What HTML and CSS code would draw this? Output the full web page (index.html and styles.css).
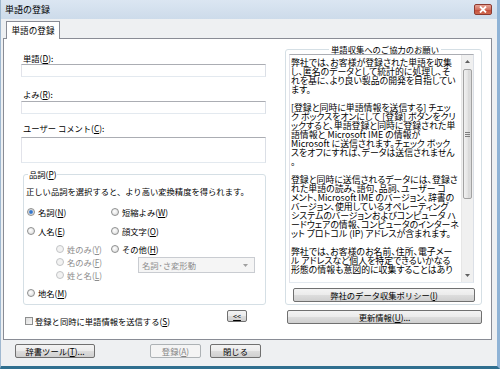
FILE: index.html
```html
<html>
    <head>
        <link rel="stylesheet" href="styles.css">
    </head>
    <body>
        <div class="window">
            <div class="titlebar">
                <span class="title">単語の登録</span>
                <span class="close-btn">
                    <svg width="10" height="7" viewBox="0 0 10 7"><path d="M2 0.5 L8 6.5 M8 0.5 L2 6.5" stroke="#fff" stroke-width="1.8"/></svg>
                </span>
            </div>
            <div class="client">
                <div class="tabs"><div class="tab">単語の登録</div></div>
                <div class="panel">
                    <div class="left-col">
                        <div class="lbl lbl-word">単語(<u>D</u>):</div>
                        <div class="textbox tb-word"></div>
                        <div class="lbl lbl-yomi">よみ(<u>R</u>):</div>
                        <div class="textbox tb-yomi"></div>
                        <div class="lbl lbl-comment">ユーザー コメント(<u>C</u>):</div>
                        <div class="textbox tb-comment"></div>

                        <fieldset class="group hinshi">
                            <legend>品詞(<u>P</u>)</legend>
                            <div class="hint">正しい品詞を選択すると、より高い変換精度を得られます。</div>
                            <div class="radio-cols">
                                <div class="radio-col">
                                    <div class="opt r1"><span class="radio checked"></span>名詞(<u>N</u>)</div>
                                    <div class="opt r2"><span class="radio"></span>人名(<u>E</u>)</div>
                                    <div class="opt sub r3 off"><span class="radio"></span>姓のみ(<u>Y</u>)</div>
                                    <div class="opt sub r4 off"><span class="radio"></span>名のみ(<u>F</u>)</div>
                                    <div class="opt sub r4 off"><span class="radio"></span>姓と名(<u>L</u>)</div>
                                    <div class="opt r6"><span class="radio"></span>地名(<u>M</u>)</div>
                                </div>
                                <div class="radio-col col-b">
                                    <div class="opt r1"><span class="radio"></span>短縮よみ(<u>W</u>)</div>
                                    <div class="opt r2"><span class="radio"></span>顔文字(<u>O</u>)</div>
                                    <div class="opt r3"><span class="radio"></span>その他(<u>H</u>)</div>
                                    <div class="combo">
                                        <span>名詞･さ変形動</span>
                                        <svg width="5" height="3" viewBox="0 0 5 3"><path d="M0 0 H5 L2.5 3 Z" fill="#a0a0a0"/></svg>
                                    </div>
                                </div>
                            </div>
                        </fieldset>

                        <div class="send-row">
                            <div class="send"><span class="check"></span>登録と同時に単語情報を送信する(<u>S</u>)</div>
                            <div class="btn btn-collapse"><u>&lt;&lt;</u></div>
                        </div>
                    </div>

                    <div class="right-col">
                        <fieldset class="group request">
                            <legend>単語収集へのご協力のお願い</legend>
                            <div class="memo">
                                <div class="memo-text">
                                    弊社では、お客様が登録された単語を収集<br>
                                    し、匿名のデータとして統計的に処理し、そ<br>
                                    れを基に、より良い製品の開発を目指してい<br>
                                    ます。<br>
                                    <br>
                                    [登録と同時に単語情報を送信する] チェッ<br>
                                    ク ボックスをオンにして [登録] ボタンをクリ<br>
                                    ックすると、単語登録と同時に登録された単<br>
                                    語情報と Microsoft IME の情報が<br>
                                    Microsoft に送信されます。チェック ボック<br>
                                    スをオフにすれば、データは送信されません<br>
                                    。<br>
                                    <br>
                                    登録と同時に送信されるデータには、登録さ<br>
                                    れた単語の読み、語句、品詞、ユーザー コ<br>
                                    メント、Microsoft IME のバージョン、辞書の<br>
                                    バージョン、使用しているオペレーティング<br>
                                    システムのバージョンおよびコンピュータ ハ<br>
                                    ードウェアの情報、コンピュータのインターネ<br>
                                    ット プロトコル (IP) アドレスが含まれます。<br>
                                    <br>
                                    弊社では、お客様のお名前、住所、電子メー<br>
                                    ル アドレスなど個人を特定できるいかなる<br>
                                    形態の情報も意図的に収集することはあり
                                </div>
                                <div class="scrollbar">
                                    <div class="sb-arrow"><svg width="5" height="3" viewBox="0 0 5 3"><path d="M0 3 H5 L2.5 0 Z" fill="#606060"/></svg></div>
                                    <div class="sb-track">
                                        <div class="sb-thumb"><span class="grip"></span></div>
                                    </div>
                                    <div class="sb-arrow"><svg width="5" height="3" viewBox="0 0 5 3"><path d="M0 0 H5 L2.5 3 Z" fill="#606060"/></svg></div>
                                </div>
                            </div>
                            <div class="btn btn-policy">弊社のデータ収集ポリシー(<u>I</u>)</div>
                        </fieldset>
                        <div class="btn btn-update">更新情報(<u>U</u>)...</div>
                    </div>
                </div>

                <div class="footer">
                    <div class="btn btn-tools">辞書ツール(<u>T</u>)...</div>
                    <div class="btn btn-register disabled">登録(<u>A</u>)</div>
                    <div class="btn btn-close">閉じる</div>
                </div>
            </div>
        </div>
    </body>
</html>
```

FILE: styles.css
```css
body {
    margin: 0;
    font-family: "Noto Sans CJK JP", "Noto Sans", sans-serif;
    font-size: 8.3px;
    color: #000;
}

u {
    text-decoration: underline;
    text-underline-offset: 1px;
}

.window {
    width: 500px;
    height: 369px;
    box-sizing: border-box;
    display: flex;
    flex-direction: column;
    background: #eef0f2;
    border-left: 1px solid #9fb8d0;
    border-right: 3px solid #8fb3d6;
    border-bottom: 3px solid #2f6f8f;
}

/* title bar */
.titlebar {
    height: 19px;
    display: flex;
    align-items: flex-start;
    background: linear-gradient(#dbe6f2, #cddbea);
}
.title {
    font-size: 9px;
    line-height: 19px;
    padding-left: 4px;
}
.close-btn {
    margin: 4px 5px 0 auto;
    width: 18px;
    height: 11px;
    box-sizing: border-box;
    border: 1px solid #8d3a30;
    border-radius: 2px;
    background: linear-gradient(#e7a496, #d2705f 50%, #c24a38 51%, #d06a50);
    display: flex;
    align-items: center;
    justify-content: center;
}

.client {
    flex: 1;
    display: flex;
    flex-direction: column;
    padding: 2px 5px 0 2px;
}

/* tab */
.tabs {
    display: flex;
    height: 17px;
}
.tab {
    margin-left: 3px;
    width: 54px;
    height: 18px;
    box-sizing: border-box;
    border: 1px solid #898c95;
    border-bottom: none;
    background: #fff;
    text-align: center;
    line-height: 17px;
    font-size: 8.6px;
    position: relative;
    z-index: 1;
}

.panel {
    width: 489px;
    height: 302px;
    box-sizing: border-box;
    border: 1px solid #898c95;
    background: #fff;
    display: flex;
}

/* left column */
.left-col {
    width: 245px;
    margin-left: 17px;
    display: flex;
    flex-direction: column;
}
.lbl {
    line-height: 10px;
    padding-left: 2px;
}
.lbl-word { margin-top: 14px; }
.lbl-yomi { margin-top: 12px; }
.lbl-comment { margin-top: 9px; }

.textbox {
    box-sizing: border-box;
    border: 1px solid;
    border-color: #abadb3 #dbdfe6 #e3e9ef #e2e3ea;
    background: #fff;
}
.tb-word { margin-top: 1px; height: 13px; }
.tb-yomi { margin-top: 2px; height: 13px; }
.tb-comment { margin-top: 4px; height: 26px; }

.group {
    margin: 0;
    padding: 0;
    border: 1px solid #d5dfe5;
    border-radius: 3px;
    min-width: 0;
}
.group legend {
    line-height: 10px;
    padding: 0 1px;
}

.hinshi {
    margin: 6px 0 0 2px;
    padding: 0 0 5px 2px;
}
.hinshi legend {
    margin-left: 2px;
}
.hint {
    margin-top: 7px;
    line-height: 10px;
}

.radio-cols {
    display: flex;
    margin-top: 10px;
}
.radio-col {
    width: 84px;
    display: flex;
    flex-direction: column;
}
.col-b {
    width: 150px;
}
.opt {
    height: 12px;
    display: flex;
    align-items: center;
    padding-left: 1px;
}
.opt .radio {
    margin-right: 3px;
}
.sub { padding-left: 30px; }
.r2 { margin-top: 7px; }
.r3 { margin-top: 6px; }
.r4 { margin-top: 1px; }
.r6 { margin-top: 6px; }
.off { color: #8d8d8d; }

.radio {
    display: inline-block;
    width: 8px;
    height: 8px;
    box-sizing: border-box;
    border-radius: 50%;
    border: 1px solid #8e8f8f;
    background: radial-gradient(circle at 40% 40%, #fff, #d6d6d6);
}
.radio.checked {
    background: radial-gradient(circle, #1c5fbf 0, #5b93d8 1.6px, #dadada 2.4px, #f0f0f0);
}
.off .radio {
    border-color: #c2c4c6;
    background: #f2f2f2;
}

.combo {
    margin: 2px 0 0 28px;
    width: 117px;
    height: 16px;
    box-sizing: border-box;
    border: 1px solid #c9ccd1;
    background: #f5f5f5;
    color: #8d8d8d;
    display: flex;
    align-items: center;
    justify-content: space-between;
    padding: 0 6px 0 3px;
}

.send-row {
    display: flex;
    align-items: flex-start;
    margin-top: 5px;
}
.send {
    margin-top: 6px;
    line-height: 10px;
    display: flex;
    align-items: center;
    padding-left: 4px;
}
.check {
    width: 8px;
    height: 8px;
    box-sizing: border-box;
    border: 1px solid #8e8f8f;
    background: linear-gradient(135deg, #dcdcdc, #f6f6f6);
    margin-right: 2px;
}

/* buttons */
.btn {
    box-sizing: border-box;
    height: 14px;
    border: 1px solid #707070;
    border-radius: 2px;
    background: linear-gradient(#f3f3f3, #ebebeb 50%, #dddddd 51%, #cfcfcf);
    display: flex;
    align-items: center;
    justify-content: center;
    line-height: 12px;
}
.btn.disabled {
    border-color: #adb2b5;
    background: #f4f4f4;
    color: #838383;
}
.btn-collapse {
    width: 20px;
    height: 12px;
    margin: 0 19px 0 auto;
    font-size: 7px;
}

/* right column */
.right-col {
    width: 197px;
    margin-left: 19px;
    display: flex;
    flex-direction: column;
}
.request {
    margin-top: 5px;
    padding: 0 0 2px 3px;
}
.request legend {
    margin: 0 auto;
    padding: 0 2px;
}

.memo {
    width: 185px;
    height: 229px;
    box-sizing: border-box;
    border: 1px solid;
    border-color: #abadb3 #dbdfe6 #e3e9ef #e2e3ea;
    display: flex;
    overflow: hidden;
}
.memo-text {
    flex: 1;
    min-width: 0;
    padding: 3px 0 0 1px;
    font-size: 8.9px;
    line-height: 9px;
    font-feature-settings: "palt";
    white-space: nowrap;
    overflow: hidden;
}
.scrollbar {
    flex: 0 0 11px;
    display: flex;
    flex-direction: column;
    background: #f0f0f0;
    border-left: 1px solid #e6e6e6;
}
.sb-arrow {
    height: 13px;
    display: flex;
    align-items: center;
    justify-content: center;
}
.sb-track {
    flex: 1;
}
.sb-thumb {
    margin: 1px 1px 0 1px;
    height: 130px;
    box-sizing: border-box;
    border: 1px solid #a2a2a2;
    border-radius: 2px;
    background: linear-gradient(90deg, #f1f1f1, #e4e4e4 50%, #d8d8d8 51%, #dcdcdc);
    display: flex;
    align-items: center;
    justify-content: center;
}
.grip {
    width: 5px;
    height: 5px;
    background: repeating-linear-gradient(#7e7e7e 0 1px, transparent 1px 2px);
}

.btn-policy {
    margin: 5px 0 0 4px;
    width: 182px;
}
.btn-update {
    margin: 5px 0 0 2px;
    width: 195px;
}

/* footer */
.footer {
    display: flex;
    padding: 4px 0 0 12px;
}
.btn-tools { width: 80px; }
.btn-register { width: 51px; margin-left: 55px; }
.btn-close { width: 51px; margin-left: 9px; }
```
